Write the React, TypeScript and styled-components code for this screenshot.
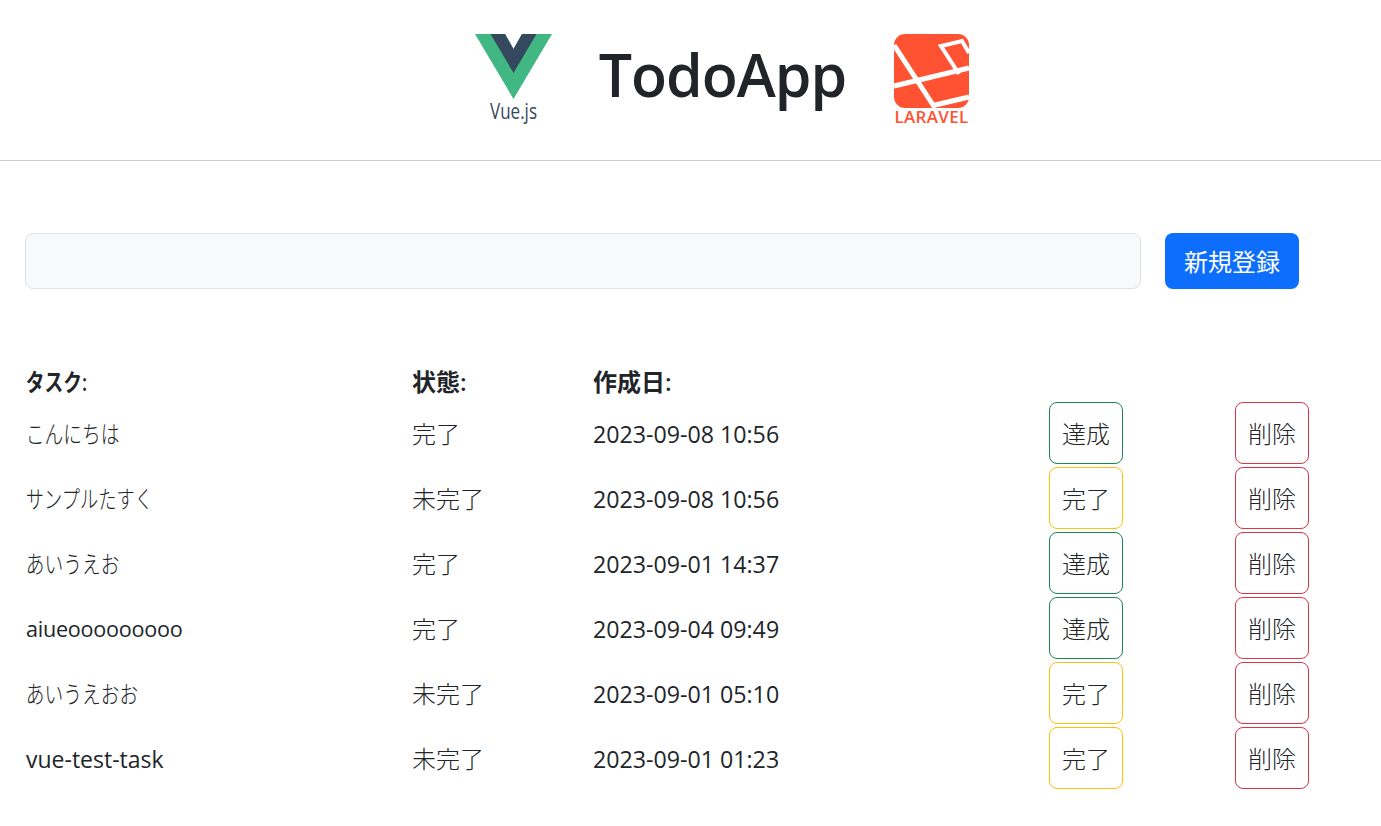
import styled, { createGlobalStyle } from 'styled-components'

const GlobalStyle = createGlobalStyle`
  html, body {
    margin: 0;
    padding: 0;
    background: #fff;
    color: #212529;
    font-family: "Open Sans", "Noto Sans", "Noto Sans CJK JP", sans-serif;
  }
`

const Header = styled.header`
  height: 160px;
  border-bottom: 1px solid #ccc;
  display: flex;
  justify-content: center;
  align-items: flex-start;
  gap: 47px;
  padding-left: 66px;
`

const LogoBox = styled.div<{ $top: number }>`
  display: flex;
  padding-top: ${(p) => p.$top}px;
`

const Title = styled.h1`
  margin: 0;
  padding-top: 35px;
  font-size: 59px;
  line-height: 78px;
  font-weight: 600;
  letter-spacing: -1px;
`

const Main = styled.main`
  padding: 72px 0 0 25px;
`

const Form = styled.form`
  display: flex;
  gap: 24px;
`

const TaskInput = styled.input`
  width: 1116px;
  height: 56px;
  box-sizing: border-box;
  background: #f8f9fa;
  border: 1px solid #dee2e6;
  border-radius: 8px;
`

const SubmitButton = styled.button`
  width: 134px;
  height: 56px;
  padding: 0 0 2px;
  background: #0d6efd;
  color: #fff;
  border: none;
  border-radius: 8px;
  font: inherit;
  font-size: 24px;
`

const Table = styled.div`
  margin-top: 73px;
  font-size: 24px;
`

const Row = styled.div`
  display: grid;
  grid-template-columns: 387px 181px 456px 186px 74px;
  align-items: center;
  height: 65px;
`

const HeadRow = styled(Row)`
  height: 38px;
  box-sizing: border-box;
  padding-bottom: 2px;
  font-weight: 600;
`

/* kana in the reference are condensed, so the name column is squeezed horizontally */
const NameCell = styled.span<{ $squeeze?: number; $size?: number; $spacing?: number; $drop?: number; $weight?: number }>`
  display: inline-block;
  justify-self: start;
  padding: ${(p) => p.$drop ?? 0}px 0 0 1px;
  white-space: nowrap;
  font-size: ${(p) => p.$size ?? 24}px;
  font-weight: ${(p) => p.$weight ?? 'inherit'};
  letter-spacing: ${(p) => p.$spacing ?? 0}px;
  transform: scaleX(${(p) => p.$squeeze ?? 1});
  transform-origin: left center;
`

const StatusCell = styled.span`
  font-weight: 300;
`

const DateCell = styled.span`
  padding-top: 2px;
  font-size: 23.2px;
`

const ActionButton = styled.button<{ $color: string }>`
  width: 74px;
  height: 62px;
  padding: 0;
  background: #fff;
  color: #212529;
  border: 1px solid ${(p) => p.$color};
  border-radius: 8px;
  font: inherit;
  font-weight: 300;
`

const VueLogo = () => (
  <svg width="78" height="90" viewBox="-1 0 78 90">
    <polygon points="0,0 30,0 38.500,15 47,0 77,0 38.500,65" fill="#41b883" />
    <polygon points="15.500,0 30,0 38.500,15 47,0 61.500,0 38.500,39" fill="#35495e" />
    <text x="38.500" y="85" textAnchor="middle" fontSize="22" fill="#35495e" fontFamily="Open Sans" textLength="47" lengthAdjust="spacingAndGlyphs">Vue.js</text>
  </svg>
)

const LaravelLogo = () => (
  <svg width="80" height="94" viewBox="0 0 80 94">
    <rect x="1" y="0" width="75" height="74" rx="11" fill="#ff5233" />
    <g fill="none" stroke="#fff" strokeWidth="5">
      <path d="M1 11 L42 74" />
      <path d="M1 52 L76 34" />
      <path d="M76 19 L69 7 L48 12 L66 40" strokeWidth="4" />
      <path d="M42 71 L76 63" />
    </g>
    <text x="38.500" y="89" textAnchor="middle" fontSize="17" fontWeight="600" letterSpacing="0.300" fill="#ff5233" fontFamily="Open Sans">LARAVEL</text>
  </svg>
)

const tasks = [
  { name: 'こんにちは', status: '完了', date: '2023-09-08 10:56', done: true, squeeze: 0.78, weight: 300 },
  { name: 'サンプルたすく', status: '未完了', date: '2023-09-08 10:56', done: false, squeeze: 0.76, weight: 300 },
  { name: 'あいうえお', status: '完了', date: '2023-09-01 14:37', done: true, squeeze: 0.78, weight: 300 },
  { name: 'aiueooooooooo', status: '完了', date: '2023-09-04 09:49', done: true, size: 21.6, spacing: -0.25, drop: 2 },
  { name: 'あいうえおお', status: '未完了', date: '2023-09-01 05:10', done: false, squeeze: 0.78, weight: 300 },
  { name: 'vue-test-task', status: '未完了', date: '2023-09-01 01:23', done: false, size: 23, drop: 2 },
]

export default function App() {
  return (
    <>
      <GlobalStyle />
      <Header>
        <LogoBox $top={34}><VueLogo /></LogoBox>
        <Title>TodoApp</Title>
        <LogoBox $top={34}><LaravelLogo /></LogoBox>
      </Header>
      <Main>
        <Form>
          <TaskInput />
          <SubmitButton type="button">新規登録</SubmitButton>
        </Form>
        <Table>
          <HeadRow>
            <NameCell $squeeze={0.78}>タスク:</NameCell>
            <span>状態:</span>
            <span>作成日:</span>
          </HeadRow>
          {tasks.map((task, i) => (
            <Row key={i}>
              <NameCell $squeeze={task.squeeze} $size={task.size} $spacing={task.spacing} $drop={task.drop} $weight={task.weight}>
                {task.name}
              </NameCell>
              <StatusCell>{task.status}</StatusCell>
              <DateCell>{task.date}</DateCell>
              <ActionButton $color={task.done ? '#198754' : '#ffc107'}>
                {task.done ? '達成' : '完了'}
              </ActionButton>
              <ActionButton $color="#dc3545">削除</ActionButton>
            </Row>
          ))}
        </Table>
      </Main>
    </>
  )
}
